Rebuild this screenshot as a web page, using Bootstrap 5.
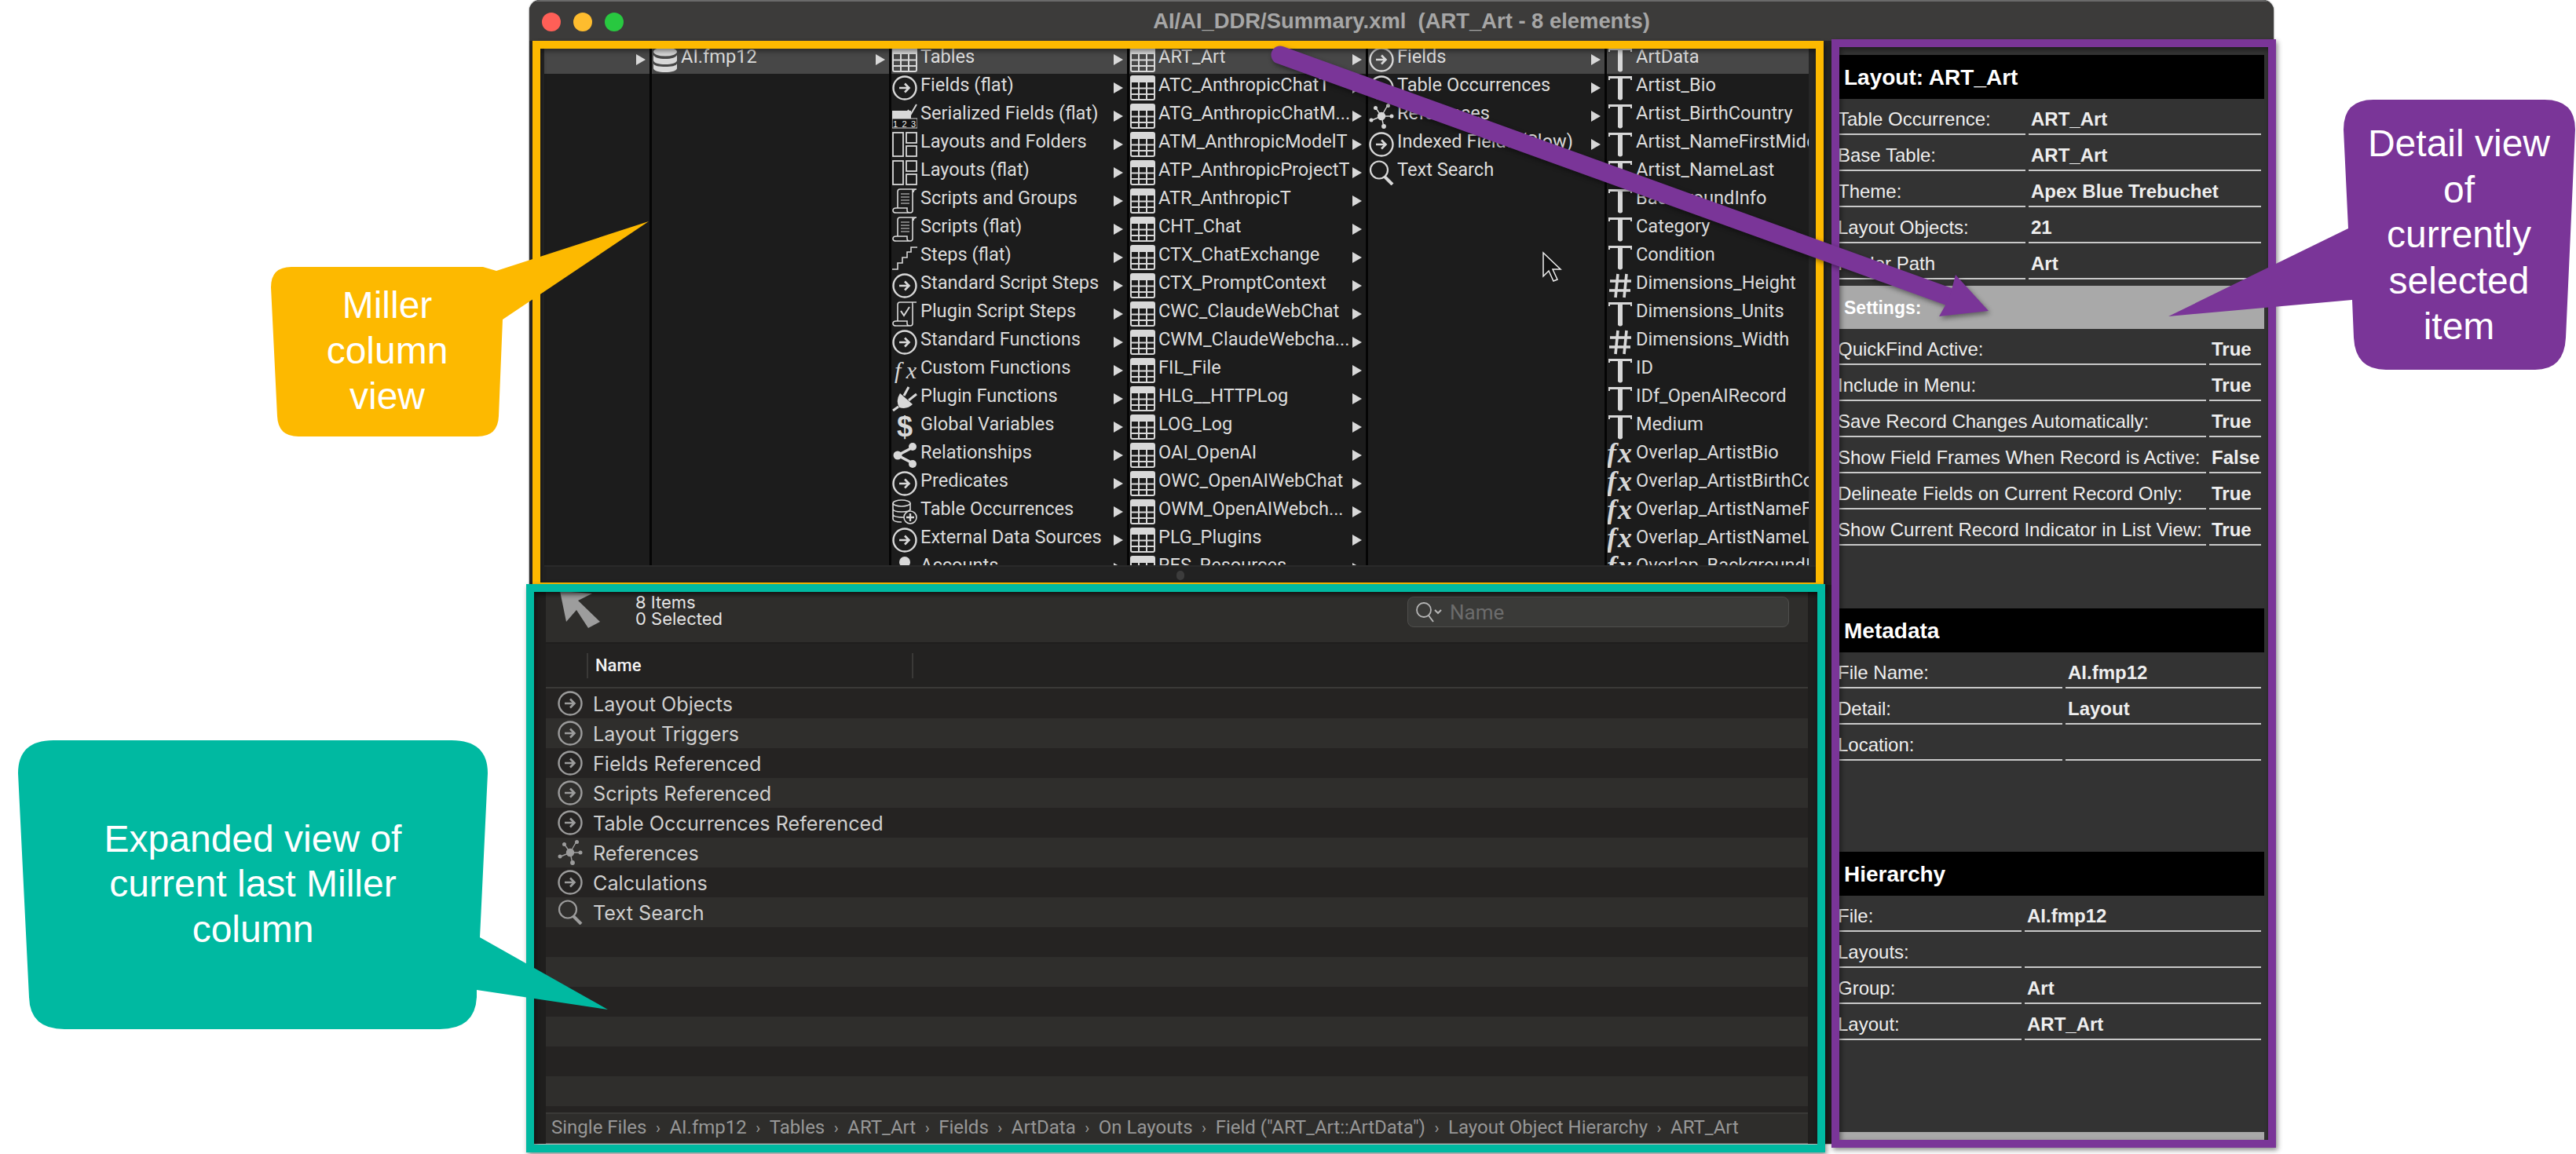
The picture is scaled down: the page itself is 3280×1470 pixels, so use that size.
<!DOCTYPE html>
<html lang="en"><head><meta charset="utf-8"><title>AI_DDR Summary</title>
<link href="https://cdn.jsdelivr.net/npm/bootstrap@5.3.0/dist/css/bootstrap.min.css" rel="stylesheet">
<style>
html,body{background:#fff;overflow:hidden}
.stage{width:3280px;height:1470px;padding-left:674px;position:relative}
.app-win{width:2221px;height:1457px;background:#3a3a39;border-radius:14px 14px 8px 8px;overflow:hidden;box-shadow:0 0 2px #333}
.app-title{height:52px;background:#3c3b3a;border-top:2px solid #6a6a6a;font:700 27.4px "Liberation Sans",sans-serif;color:#a6a6a6;white-space:pre;position:relative}
.light{width:24px;height:24px;border-radius:50%}
.l-red{background:#ff5f57}.l-yel{background:#febc2e}.l-grn{background:#28c840}
.lights{left:16px;top:14px;gap:16px}
.app-body{height:1405px}
.left-pane{width:1658px}
.miller{height:693px;background:#262626;padding:6px 29px 0 19px}
.mcols{height:662px;overflow:hidden;background:#1c1c1c}
.mcol{flex:none;border-right:3px solid #050505;height:662px}
.w137{width:137px}.w305{width:305px}.w303{width:303px}.w304{width:304px}.w257{width:257px;border-right:0}
.mrow{height:36px;padding-left:1px;color:#dcdcdc;font:400 23.6px/36px Roboto,sans-serif;white-space:nowrap}
.mrow.sel{background:#474747}
.mrow svg{width:32px;height:32px;flex:none;color:#d8d8d8}
.mtxt{flex:1;min-width:0;overflow:hidden;padding:0 0 7px 4px;line-height:29px}
.tri{flex:none;width:0;height:0;border-left:12px solid #d8d8d8;border-top:7px solid transparent;border-bottom:7px solid transparent;margin:0 5px 0 4px}
.mstrip{height:25px;margin:0 -10px 0 0;background:#222;border-top:2px solid #2a2a2a;position:relative}
.thumb{position:absolute;left:805px;top:5px;width:10px;height:12px;border-radius:5px;background:#3c3c3c}
.lower{height:712px;background:#1f1e1d;padding:0 30px 0 21px}
.ltool{height:73px;background:#2e2d2b;color:#e4e4e4;font:400 22px/21px Inter,sans-serif}
.uparrow{width:52px;height:48px;margin:8px 0 0 18px;flex:none}
.counts{margin:12px 0 0 44px}
.sfield{width:486px;height:39px;margin:15px 24px 0 auto;background:#3a3a38;border:1px solid #4f4f4d;border-radius:8px;color:#6c6c6c;font:400 26px/37px Roboto,sans-serif;padding-left:8px}
.sfield span{padding-top:2px}
.sfield svg{width:36px;height:32px;color:#b5b5b5;margin-right:9px}
.lhead{height:57px;margin-top:2px;background:#232221;border-bottom:2px solid #3a3937;color:#f2f2f2;font:500 22px/55px Roboto,sans-serif;padding-left:52px}
.lsep{width:2px;height:32px;background:#3a3937}
.lname{width:412px;padding-left:9px;height:32px;line-height:32px}
.lrow{height:38px;background:#252322;color:#cfcfcf;font:400 25.2px/38px Inter,sans-serif;padding-left:15px;gap:13px}
.lrow.alt{background:#2f2e2c}
.lrow span{padding-top:2px}
.lrow svg{width:32px;height:32px;color:#9c9c9c;flex:none}
.lrow.cut{height:8px}
.lpath{height:40px;background:#2e2d2b;border-top:2px solid #3a3937;color:#979797;font:400 24px/34px Roboto,sans-serif;padding-left:7px;white-space:pre;border-bottom:1px solid #666}
.psep{margin:0 11.5px;font-size:20px}
.detail{flex:1;min-width:0;background:#333;padding:18px 12px 5px 10px;color:#eee;font:400 24px/1 "Liberation Sans",sans-serif}
.dhead{height:56px;background:#000;color:#fff;font:700 28px/58px "Liberation Sans",sans-serif;padding-left:6px;flex:none}
.dsub{height:55px;margin-top:8px;background:#a9a9a9;color:#fff;font:700 23px/57px "Liberation Sans",sans-serif;padding-left:6px;flex:none}
.drow{height:46px;gap:4px;padding-right:4px;flex:none}
.drow>div{border-bottom:2px solid #c9c9c9;height:46px;line-height:51px;white-space:nowrap}
.dlab{text-indent:-2px;overflow:hidden;flex:none}
.dval{flex:1;font-weight:700;padding-left:3px;min-width:0}
.lab-a .dlab{width:237px}.lab-b .dlab{width:467px}.lab-c .dlab{width:284px}.lab-d .dlab{width:232px}
.gap80{height:80px;flex:none}.gap116{height:116px;flex:none}
.dfoot{height:10px;background:#a9a9a9;flex:none;margin-top:auto}
.overlay{position:absolute;left:0;top:0;width:3280px;height:1470px;pointer-events:none}
.call{font:400 48px "Liberation Sans",sans-serif;fill:#fff;text-anchor:middle}
.ann-sh{filter:drop-shadow(2px 3px 3px rgba(0,0,0,.45))}
</style></head><body class="m-0">
<svg width="0" height="0" class="position-absolute"><defs>
<symbol id="i-tbl" viewBox="0 0 32 32"><rect x="1" y="1" width="30" height="30" rx="2" fill="none" stroke="currentColor" stroke-width="2"/><rect x="1" y="1" width="30" height="8" fill="currentColor"/><path d="M11 9V31M21 9V31M1 16.5H31M1 24H31" stroke="currentColor" stroke-width="2" fill="none"/></symbol>
<symbol id="i-go" viewBox="0 0 32 32"><circle cx="16" cy="16" r="14.5" fill="none" stroke="currentColor" stroke-width="2.4"/><path d="M9 16H21M16 10.5L21.5 16L16 21.5" fill="none" stroke="currentColor" stroke-width="2.6"/></symbol>
<symbol id="i-db" viewBox="0 0 32 32"><ellipse cx="16" cy="6" rx="15" ry="5.5" fill="currentColor"/><path d="M1 10c1 3 7 5 15 5s14-2 15-5v7c0 3-7 5-15 5S1 20 1 17zM1 21c1 3 7 4 15 4s14-1 15-4v6c0 3-7 5-15 5S1 30 1 27z" fill="currentColor"/></symbol>
<symbol id="i-ser" viewBox="0 0 32 32"><rect x="0" y="9" width="24" height="10" fill="currentColor"/><rect x="0" y="19" width="32" height="12" fill="#111" stroke="currentColor" stroke-width="1"/><text x="1" y="30" font-family="Liberation Sans" font-size="11" fill="#eee" textLength="29">123</text><path d="M20 8l4 5l7-12" stroke="currentColor" stroke-width="2" fill="none"/></symbol>
<symbol id="i-lay" viewBox="0 0 32 32"><g fill="none" stroke="currentColor" stroke-width="1.8"><rect x="1" y="1" width="13" height="30"/><rect x="18" y="1" width="13" height="13"/><rect x="18" y="18" width="13" height="13"/></g></symbol>
<symbol id="i-scr" viewBox="0 0 32 32"><g fill="none" stroke="currentColor" stroke-width="1.6"><path d="M7 25V4Q7 1 10 1H31M31 1Q27 1 27 5M25 1Q26 1 26 5V28Q26 31 23 31H5Q1 31 1 28Q1 25 5 25H19V28Q19 31 23 31"/><path d="M11 7H22M11 11H22M11 15H22M11 19H22" stroke-width="1.2"/></g></symbol>
<symbol id="i-pscr" viewBox="0 0 32 32"><g fill="none" stroke="currentColor" stroke-width="1.6"><path d="M7 25V4Q7 1 10 1H31M25 1Q26 1 26 5V28Q26 31 23 31H5Q1 31 1 28Q1 25 5 25H19V28Q19 31 23 31"/><path d="M11 12l4 6l7-11" stroke-width="2"/></g></symbol>
<symbol id="i-stp" viewBox="0 0 32 32"><path d="M0 31H7V23H13V16H19V9H24V3H32" fill="none" stroke="currentColor" stroke-width="1.6"/></symbol>
<symbol id="i-fxt" viewBox="0 0 32 32"><text x="3" y="26" font-family="Liberation Serif" font-style="italic" font-size="30" fill="currentColor" textLength="28">fx</text></symbol>
<symbol id="i-plug" viewBox="0 0 32 32"><path d="M10 9L26 23Q19 30 9 27Q4 19 10 9Z" fill="currentColor"/><path d="M15 12L21 1M21 18L31 10M8 26L1 31" stroke="currentColor" stroke-width="3" fill="none"/></symbol>
<symbol id="i-usd" viewBox="0 0 32 32"><text x="16" y="28" text-anchor="middle" font-family="Liberation Sans" font-weight="700" font-size="36" fill="currentColor">$</text></symbol>
<symbol id="i-shr" viewBox="0 0 32 32"><path d="M26 6L7 16L26 26" stroke="currentColor" stroke-width="3.5" fill="none"/><circle cx="26" cy="5" r="5" fill="currentColor"/><circle cx="7" cy="16" r="5.5" fill="currentColor"/><circle cx="26" cy="27" r="5" fill="currentColor"/></symbol>
<symbol id="i-toc" viewBox="0 0 32 32"><g fill="none" stroke="currentColor" stroke-width="1.6"><ellipse cx="12" cy="5" rx="11" ry="4"/><path d="M1 5V25Q1 29 12 29M1 12Q1 16 12 16T23 12M1 19Q1 23 15 23M23 5V14"/><circle cx="23" cy="23" r="8"/><path d="M23 18V28M18 23H28" stroke-width="2.4"/></g></symbol>
<symbol id="i-acc" viewBox="0 0 32 32"><circle cx="16" cy="8" r="7" fill="currentColor"/><path d="M4 31Q5 17 16 17T28 31Z" fill="currentColor"/></symbol>
<symbol id="i-hub" viewBox="0 0 32 32"><g stroke="currentColor" stroke-width="1.4" fill="currentColor"><path d="M16 16L24 2M16 16L9 6M16 16L28 16M16 16L4 21M16 16L19 30" fill="none"/><circle cx="16" cy="16" r="4.5"/><circle cx="24.500" cy="2.500" r="1.800"/><circle cx="8.500" cy="5.500" r="1.800"/><circle cx="29" cy="16" r="1.800"/><circle cx="3" cy="21" r="1.800"/><circle cx="19" cy="29" r="2.200"/></g></symbol>
<symbol id="i-sch" viewBox="0 0 32 32"><circle cx="13" cy="12.500" r="11" fill="none" stroke="currentColor" stroke-width="2.2"/><path d="M20 21L30 31" stroke="currentColor" stroke-width="4"/></symbol>
<symbol id="i-t" viewBox="0 0 32 32"><path d="M1 1H31V6H29V4H19V30Q16 33 13 30V4H3V6H1Z" fill="currentColor"/></symbol>
<symbol id="i-num" viewBox="0 0 32 32"><path d="M13 1L10 31M24 1L21 31M3 10H30M2 22H29" stroke="currentColor" stroke-width="3.600" fill="none"/></symbol>
<symbol id="i-fx" viewBox="0 0 32 32"><text x="-1" y="25" font-family="Liberation Serif" font-style="italic" font-weight="700" font-size="36" fill="currentColor" textLength="32">fx</text></symbol>
</defs></svg>

<div class="stage">
<div class="app-win d-flex flex-column">
<div class="app-title d-flex align-items-center justify-content-center">
<div class="lights position-absolute d-flex"><div class="light l-red"></div><div class="light l-yel"></div><div class="light l-grn"></div></div>
<div>AI/AI_DDR/Summary.xml  (ART_Art - 8 elements)</div>
</div>
<div class="app-body d-flex">
<div class="left-pane d-flex flex-column">
<div class="miller">
<div class="mcols d-flex">
<div class="mcol w137"><div class="mrow sel d-flex align-items-center"><span class="mtxt"></span><i class="tri"></i></div></div>
<div class="mcol w305"><div class="mrow sel d-flex align-items-center"><svg><use href="#i-db"/></svg><span class="mtxt">AI.fmp12</span><i class="tri"></i></div></div>
<div class="mcol w303">
<div class="mrow sel d-flex align-items-center"><svg><use href="#i-tbl"/></svg><span class="mtxt">Tables</span><i class="tri"></i></div>
<div class="mrow d-flex align-items-center"><svg><use href="#i-go"/></svg><span class="mtxt">Fields (flat)</span><i class="tri"></i></div>
<div class="mrow d-flex align-items-center"><svg><use href="#i-ser"/></svg><span class="mtxt">Serialized Fields (flat)</span><i class="tri"></i></div>
<div class="mrow d-flex align-items-center"><svg><use href="#i-lay"/></svg><span class="mtxt">Layouts and Folders</span><i class="tri"></i></div>
<div class="mrow d-flex align-items-center"><svg><use href="#i-lay"/></svg><span class="mtxt">Layouts (flat)</span><i class="tri"></i></div>
<div class="mrow d-flex align-items-center"><svg><use href="#i-scr"/></svg><span class="mtxt">Scripts and Groups</span><i class="tri"></i></div>
<div class="mrow d-flex align-items-center"><svg><use href="#i-scr"/></svg><span class="mtxt">Scripts (flat)</span><i class="tri"></i></div>
<div class="mrow d-flex align-items-center"><svg><use href="#i-stp"/></svg><span class="mtxt">Steps (flat)</span><i class="tri"></i></div>
<div class="mrow d-flex align-items-center"><svg><use href="#i-go"/></svg><span class="mtxt">Standard Script Steps</span><i class="tri"></i></div>
<div class="mrow d-flex align-items-center"><svg><use href="#i-pscr"/></svg><span class="mtxt">Plugin Script Steps</span><i class="tri"></i></div>
<div class="mrow d-flex align-items-center"><svg><use href="#i-go"/></svg><span class="mtxt">Standard Functions</span><i class="tri"></i></div>
<div class="mrow d-flex align-items-center"><svg><use href="#i-fxt"/></svg><span class="mtxt">Custom Functions</span><i class="tri"></i></div>
<div class="mrow d-flex align-items-center"><svg><use href="#i-plug"/></svg><span class="mtxt">Plugin Functions</span><i class="tri"></i></div>
<div class="mrow d-flex align-items-center"><svg><use href="#i-usd"/></svg><span class="mtxt">Global Variables</span><i class="tri"></i></div>
<div class="mrow d-flex align-items-center"><svg><use href="#i-shr"/></svg><span class="mtxt">Relationships</span><i class="tri"></i></div>
<div class="mrow d-flex align-items-center"><svg><use href="#i-go"/></svg><span class="mtxt">Predicates</span><i class="tri"></i></div>
<div class="mrow d-flex align-items-center"><svg><use href="#i-toc"/></svg><span class="mtxt">Table Occurrences</span><i class="tri"></i></div>
<div class="mrow d-flex align-items-center"><svg><use href="#i-go"/></svg><span class="mtxt">External Data Sources</span><i class="tri"></i></div>
<div class="mrow d-flex align-items-center"><svg><use href="#i-acc"/></svg><span class="mtxt">Accounts</span><i class="tri"></i></div>
</div>
<div class="mcol w304">
<div class="mrow sel d-flex align-items-center"><svg><use href="#i-tbl"/></svg><span class="mtxt">ART_Art</span><i class="tri"></i></div>
<div class="mrow d-flex align-items-center"><svg><use href="#i-tbl"/></svg><span class="mtxt">ATC_AnthropicChatT</span><i class="tri"></i></div>
<div class="mrow d-flex align-items-center"><svg><use href="#i-tbl"/></svg><span class="mtxt">ATG_AnthropicChatM...</span><i class="tri"></i></div>
<div class="mrow d-flex align-items-center"><svg><use href="#i-tbl"/></svg><span class="mtxt">ATM_AnthropicModelT</span><i class="tri"></i></div>
<div class="mrow d-flex align-items-center"><svg><use href="#i-tbl"/></svg><span class="mtxt">ATP_AnthropicProjectT</span><i class="tri"></i></div>
<div class="mrow d-flex align-items-center"><svg><use href="#i-tbl"/></svg><span class="mtxt">ATR_AnthropicT</span><i class="tri"></i></div>
<div class="mrow d-flex align-items-center"><svg><use href="#i-tbl"/></svg><span class="mtxt">CHT_Chat</span><i class="tri"></i></div>
<div class="mrow d-flex align-items-center"><svg><use href="#i-tbl"/></svg><span class="mtxt">CTX_ChatExchange</span><i class="tri"></i></div>
<div class="mrow d-flex align-items-center"><svg><use href="#i-tbl"/></svg><span class="mtxt">CTX_PromptContext</span><i class="tri"></i></div>
<div class="mrow d-flex align-items-center"><svg><use href="#i-tbl"/></svg><span class="mtxt">CWC_ClaudeWebChat</span><i class="tri"></i></div>
<div class="mrow d-flex align-items-center"><svg><use href="#i-tbl"/></svg><span class="mtxt">CWM_ClaudeWebcha...</span><i class="tri"></i></div>
<div class="mrow d-flex align-items-center"><svg><use href="#i-tbl"/></svg><span class="mtxt">FIL_File</span><i class="tri"></i></div>
<div class="mrow d-flex align-items-center"><svg><use href="#i-tbl"/></svg><span class="mtxt">HLG__HTTPLog</span><i class="tri"></i></div>
<div class="mrow d-flex align-items-center"><svg><use href="#i-tbl"/></svg><span class="mtxt">LOG_Log</span><i class="tri"></i></div>
<div class="mrow d-flex align-items-center"><svg><use href="#i-tbl"/></svg><span class="mtxt">OAI_OpenAI</span><i class="tri"></i></div>
<div class="mrow d-flex align-items-center"><svg><use href="#i-tbl"/></svg><span class="mtxt">OWC_OpenAIWebChat</span><i class="tri"></i></div>
<div class="mrow d-flex align-items-center"><svg><use href="#i-tbl"/></svg><span class="mtxt">OWM_OpenAIWebch...</span><i class="tri"></i></div>
<div class="mrow d-flex align-items-center"><svg><use href="#i-tbl"/></svg><span class="mtxt">PLG_Plugins</span><i class="tri"></i></div>
<div class="mrow d-flex align-items-center"><svg><use href="#i-tbl"/></svg><span class="mtxt">RES_Resources</span><i class="tri"></i></div>
</div>
<div class="mcol w304">
<div class="mrow sel d-flex align-items-center"><svg><use href="#i-go"/></svg><span class="mtxt">Fields</span><i class="tri"></i></div>
<div class="mrow d-flex align-items-center"><svg><use href="#i-go"/></svg><span class="mtxt">Table Occurrences</span><i class="tri"></i></div>
<div class="mrow d-flex align-items-center"><svg><use href="#i-hub"/></svg><span class="mtxt">References</span><i class="tri"></i></div>
<div class="mrow d-flex align-items-center"><svg><use href="#i-go"/></svg><span class="mtxt">Indexed Fields (Slow)</span><i class="tri"></i></div>
<div class="mrow d-flex align-items-center"><svg><use href="#i-sch"/></svg><span class="mtxt">Text Search</span></div>
</div>
<div class="mcol w257">
<div class="mrow sel d-flex align-items-center"><svg><use href="#i-t"/></svg><span class="mtxt">ArtData</span></div>
<div class="mrow d-flex align-items-center"><svg><use href="#i-t"/></svg><span class="mtxt">Artist_Bio</span></div>
<div class="mrow d-flex align-items-center"><svg><use href="#i-t"/></svg><span class="mtxt">Artist_BirthCountry</span></div>
<div class="mrow d-flex align-items-center"><svg><use href="#i-t"/></svg><span class="mtxt">Artist_NameFirstMiddle</span></div>
<div class="mrow d-flex align-items-center"><svg><use href="#i-t"/></svg><span class="mtxt">Artist_NameLast</span></div>
<div class="mrow d-flex align-items-center"><svg><use href="#i-t"/></svg><span class="mtxt">BackgroundInfo</span></div>
<div class="mrow d-flex align-items-center"><svg><use href="#i-t"/></svg><span class="mtxt">Category</span></div>
<div class="mrow d-flex align-items-center"><svg><use href="#i-t"/></svg><span class="mtxt">Condition</span></div>
<div class="mrow d-flex align-items-center"><svg><use href="#i-num"/></svg><span class="mtxt">Dimensions_Height</span></div>
<div class="mrow d-flex align-items-center"><svg><use href="#i-t"/></svg><span class="mtxt">Dimensions_Units</span></div>
<div class="mrow d-flex align-items-center"><svg><use href="#i-num"/></svg><span class="mtxt">Dimensions_Width</span></div>
<div class="mrow d-flex align-items-center"><svg><use href="#i-t"/></svg><span class="mtxt">ID</span></div>
<div class="mrow d-flex align-items-center"><svg><use href="#i-t"/></svg><span class="mtxt">IDf_OpenAIRecord</span></div>
<div class="mrow d-flex align-items-center"><svg><use href="#i-t"/></svg><span class="mtxt">Medium</span></div>
<div class="mrow d-flex align-items-center"><svg><use href="#i-fx"/></svg><span class="mtxt">Overlap_ArtistBio</span></div>
<div class="mrow d-flex align-items-center"><svg><use href="#i-fx"/></svg><span class="mtxt">Overlap_ArtistBirthCountry</span></div>
<div class="mrow d-flex align-items-center"><svg><use href="#i-fx"/></svg><span class="mtxt">Overlap_ArtistNameFirstMiddle</span></div>
<div class="mrow d-flex align-items-center"><svg><use href="#i-fx"/></svg><span class="mtxt">Overlap_ArtistNameLast</span></div>
<div class="mrow d-flex align-items-center"><svg><use href="#i-fx"/></svg><span class="mtxt">Overlap_BackgroundInfo</span></div>
</div>
</div>
<div class="mstrip"><div class="thumb"></div></div>
</div>
<div class="lower d-flex flex-column">
<div class="ltool d-flex align-items-start">
<svg class="uparrow" viewBox="0 0 52 48"><polygon points="0,0 41,3 23,12 51,39 36,47 21,24 8,39" fill="#9d9d9d"/></svg>
<div class="counts">8 Items<br>0 Selected</div>
<div class="sfield d-flex align-items-center"><svg viewBox="0 0 36 32"><circle cx="12" cy="13" r="9" fill="none" stroke="currentColor" stroke-width="1.800"/><path d="M18 20L24 28M26 13L30 17L34 13" fill="none" stroke="currentColor" stroke-width="2"/></svg><span>Name</span></div>
</div>
<div class="lhead d-flex align-items-center"><div class="lsep"></div><div class="lname">Name</div><div class="lsep"></div></div>
<div class="lrow d-flex align-items-center"><svg><use href="#i-go"/></svg><span>Layout Objects</span></div>
<div class="lrow alt d-flex align-items-center"><svg><use href="#i-go"/></svg><span>Layout Triggers</span></div>
<div class="lrow d-flex align-items-center"><svg><use href="#i-go"/></svg><span>Fields Referenced</span></div>
<div class="lrow alt d-flex align-items-center"><svg><use href="#i-go"/></svg><span>Scripts Referenced</span></div>
<div class="lrow d-flex align-items-center"><svg><use href="#i-go"/></svg><span>Table Occurrences Referenced</span></div>
<div class="lrow alt d-flex align-items-center"><svg><use href="#i-hub"/></svg><span>References</span></div>
<div class="lrow d-flex align-items-center"><svg><use href="#i-go"/></svg><span>Calculations</span></div>
<div class="lrow alt d-flex align-items-center"><svg><use href="#i-sch"/></svg><span>Text Search</span></div>
<div class="lrow"></div><div class="lrow alt"></div><div class="lrow"></div><div class="lrow alt"></div><div class="lrow"></div><div class="lrow alt"></div><div class="lrow cut"></div>
<div class="lpath">Single Files<span class="psep">›</span>AI.fmp12<span class="psep">›</span>Tables<span class="psep">›</span>ART_Art<span class="psep">›</span>Fields<span class="psep">›</span>ArtData<span class="psep">›</span>On Layouts<span class="psep">›</span>Field ("ART_Art::ArtData")<span class="psep">›</span>Layout Object Hierarchy<span class="psep">›</span>ART_Art</div>
</div>
</div>
<div class="detail d-flex flex-column">
<div class="dhead">Layout: ART_Art</div>
<div class="lab-a">
<div class="drow d-flex"><div class="dlab">Table Occurrence:</div><div class="dval">ART_Art</div></div>
<div class="drow d-flex"><div class="dlab">Base Table:</div><div class="dval">ART_Art</div></div>
<div class="drow d-flex"><div class="dlab">Theme:</div><div class="dval">Apex Blue Trebuchet</div></div>
<div class="drow d-flex"><div class="dlab">Layout Objects:</div><div class="dval">21</div></div>
<div class="drow d-flex"><div class="dlab">Folder Path</div><div class="dval">Art</div></div>
</div>
<div class="dsub">Settings:</div>
<div class="lab-b">
<div class="drow d-flex"><div class="dlab">QuickFind Active:</div><div class="dval">True</div></div>
<div class="drow d-flex"><div class="dlab">Include in Menu:</div><div class="dval">True</div></div>
<div class="drow d-flex"><div class="dlab">Save Record Changes Automatically:</div><div class="dval">True</div></div>
<div class="drow d-flex"><div class="dlab">Show Field Frames When Record is Active:</div><div class="dval">False</div></div>
<div class="drow d-flex"><div class="dlab">Delineate Fields on Current Record Only:</div><div class="dval">True</div></div>
<div class="drow d-flex"><div class="dlab">Show Current Record Indicator in List View:</div><div class="dval">True</div></div>
</div>
<div class="gap80"></div>
<div class="dhead">Metadata</div>
<div class="lab-c">
<div class="drow d-flex"><div class="dlab">File Name:</div><div class="dval">AI.fmp12</div></div>
<div class="drow d-flex"><div class="dlab">Detail:</div><div class="dval">Layout</div></div>
<div class="drow d-flex"><div class="dlab">Location:</div><div class="dval"></div></div>
</div>
<div class="gap116"></div>
<div class="dhead">Hierarchy</div>
<div class="lab-d">
<div class="drow d-flex"><div class="dlab">File:</div><div class="dval">AI.fmp12</div></div>
<div class="drow d-flex"><div class="dlab">Layouts:</div><div class="dval"></div></div>
<div class="drow d-flex"><div class="dlab">Group:</div><div class="dval">Art</div></div>
<div class="drow d-flex"><div class="dlab">Layout:</div><div class="dval">ART_Art</div></div>
</div>
<div class="dfoot"></div>
</div>
</div>
</div>
<svg class="overlay" viewBox="0 0 3280 1470">
<rect class="ann-sh" x="683" y="57" width="1634" height="690" fill="none" stroke="#fdb900" stroke-width="10"/>
<rect class="ann-sh" x="675" y="749" width="1644" height="714" fill="none" stroke="#00b9a1" stroke-width="10"/>
<rect class="ann-sh" x="2337" y="55" width="556" height="1402" fill="none" stroke="#7a3598" stroke-width="10"/>
<g class="ann-sh"><path d="M1630 70L2490 381" stroke="#7a3598" stroke-width="23" stroke-linecap="round" fill="none"/><polygon points="2490,350 2532,396 2469,403 2482,380" fill="#7a3598"/></g>
<path d="M1965 322V352L1972 345L1978 358L1983 356L1977 343L1987 343Z" fill="#111" stroke="#eee" stroke-width="1.500"/>
<path d="M345 366Q345 340 371 340H615L632 345L826 282L640 407L635 530Q634 556 608 556H380Q354 556 353 530Z" fill="#fdb900"/>
<text class="call"><tspan x="493" y="405">Miller</tspan><tspan x="493" y="463">column</tspan><tspan x="493" y="521">view</tspan></text>
<path d="M23 985Q23 943 68 943H575Q621 943 621 985L611 1194L774 1286L607 1261V1270Q605 1311 560 1311H82Q38 1311 37 1270Z" fill="#00b9a1"/>
<text class="call"><tspan x="322" y="1085">Expanded view of</tspan><tspan x="322" y="1142">current last Miller</tspan><tspan x="322" y="1200">column</tspan></text>
<path d="M2984 165Q2984 127 3022 127H3240Q3279 127 3279 165L3267 430Q3265 471 3228 471H3038Q2999 471 2997 430L2995 382L2761 403L2990 291Z" fill="#7a3598"/>
<text class="call"><tspan x="3131" y="199">Detail view</tspan><tspan x="3131" y="258">of</tspan><tspan x="3131" y="315">currently</tspan><tspan x="3131" y="374">selected</tspan><tspan x="3131" y="432">item</tspan></text>
</svg>
</div>
</body></html>
